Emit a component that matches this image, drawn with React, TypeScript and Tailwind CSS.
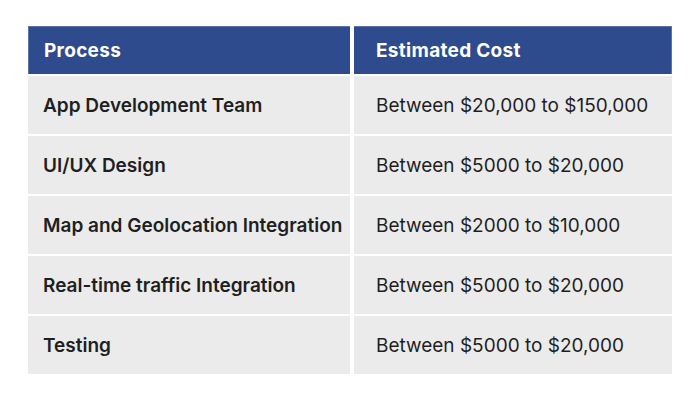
import React from "react";

const rows: [string, string][] = [
  ["App Development Team", "Between $20,000 to $150,000"],
  ["UI/UX Design", "Between $5000 to $20,000"],
  ["Map and Geolocation Integration", "Between $2000 to $10,000"],
  ["Real-time traffic Integration", "Between $5000 to $20,000"],
  ["Testing", "Between $5000 to $20,000"],
];

export default function App() {
  return (
    <div
      className="w-[700px] h-[401px] bg-white pt-[26px] pl-[28px]"
      style={{ fontFamily: "Inter, 'Open Sans', sans-serif" }}
    >
      <div className="flex flex-col gap-[2px] w-[644px]">
        <div className="flex gap-[4px] h-[48px]">
          <div className="w-[322px] bg-[#2e4b8d] border-l border-t border-[#5b73ab] flex items-center pl-[15px] pt-[2px] text-white font-bold text-[19px] tracking-[0.3px]">
            Process
          </div>
          <div className="w-[318px] bg-[#2e4b8d] border-t border-r border-[#5b73ab] flex items-center pl-[22px] pt-[2px] text-white font-bold text-[19px] tracking-[0.3px]">
            Estimated Cost
          </div>
        </div>
        {rows.map(([a, b]) => (
          <div key={a} className="flex gap-[4px] h-[58px]">
            <div className="w-[322px] bg-[#ebebeb] flex items-center pl-[15px] pt-[2px] text-[#1f1f1f] font-semibold text-[19px]">
              {a}
            </div>
            <div className="w-[318px] bg-[#ebebeb] flex items-center pl-[22px] pt-[2px] text-[#1f1f1f] text-[19px]">
              {b}
            </div>
          </div>
        ))}
      </div>
    </div>
  );
}
